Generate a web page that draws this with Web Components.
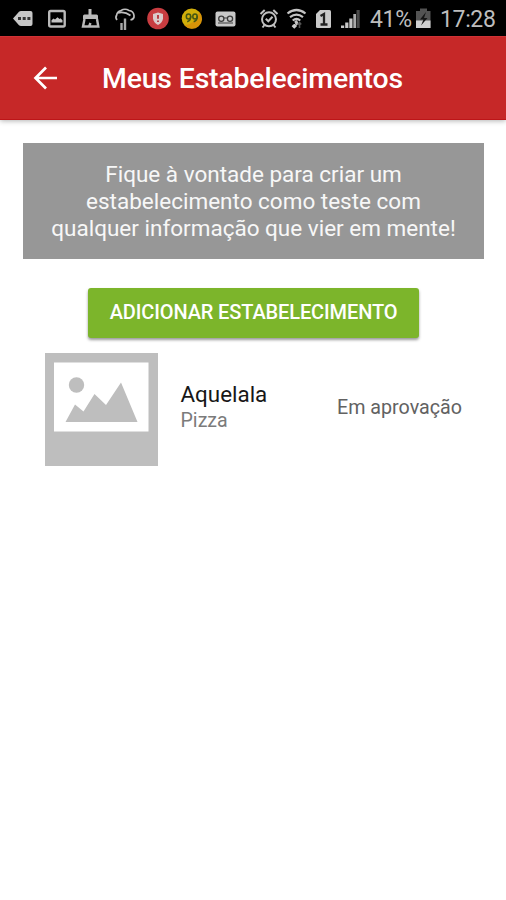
<!DOCTYPE html>
<html lang="pt-BR">
<head>
<meta charset="utf-8">
<title>Meus Estabelecimentos</title>
<style>
body { margin: 0; background: #fff; font-family: Roboto, "Liberation Sans", sans-serif; }
</style>
</head>
<body>
<app-screen>
  <status-bar slot="status"></status-bar>
  <app-toolbar slot="toolbar">Meus Estabelecimentos</app-toolbar>
  <info-banner>Fique à vontade para criar um<br>estabelecimento como teste com<br>qualquer informação que vier em mente!</info-banner>
  <raised-button>ADICIONAR ESTABELECIMENTO</raised-button>
  <place-item>
    <span slot="name">Aquelala</span>
    <span slot="kind">Pizza</span>
    <span slot="state">Em aprovação</span>
  </place-item>
</app-screen>
<script>
class BaseElement extends HTMLElement {
  constructor() {
    super();
    this.attachShadow({ mode: "open" }).innerHTML = this.constructor.markup;
  }
}

customElements.define("app-screen", class extends BaseElement {
  static markup = `
    <style>
      :host { display: flex; flex-direction: column; height: 900px; overflow: hidden; }
      main { display: flex; flex-direction: column; align-items: center; padding: 23px 22px 0 23px; }
    </style>
    <slot name="status"></slot>
    <slot name="toolbar"></slot>
    <main><slot></slot></main>`;
});

/* Each status icon is a 36px tall strip; the strips sit side by side along the bar. */
customElements.define("status-bar", class extends BaseElement {
  static markup = `
    <style>
      :host { display: flex; height: 36px; background: #000; color: #bdbdbd; overflow: hidden; }
      svg { display: block; flex: none; height: 36px; }
      span { flex: none; font-size: 23px; line-height: 40px; white-space: nowrap; }
      .pct { width: 44px; letter-spacing: -.35px; }
      .time { letter-spacing: -.35px; }
    </style>
    <svg width="40" viewBox="0 0 40 36"><path d="M13 18.500 19 11.800q.8-.8 2-.8h9.500q2 0 2 2v11q0 2-2 2H21q-1.200 0-2-.8z" fill="#c6c6c6"/><path d="M18 17h3v3h-3zm4.700 0h3v3h-3zm4.700 0h3v3h-3z" fill="#333"/></svg>
    <svg width="34" viewBox="40 0 34 36"><rect x="49.200" y="11" width="15.500" height="15.500" rx="1.500" fill="none" stroke="#b9b9b9" stroke-width="2.400"/><path d="M51.500 22.500v-2.200l2-1.800 1.500 1 2.500-2.300 2 1.800 1-.8 2 2v2.300z" fill="#c4c4c4"/></svg>
    <svg width="34" viewBox="74 0 34 36"><path d="M88.500 9h3v5.500h5q1.500 0 1.500 1.500V19H83v-3q0-1.500 1.500-1.500h4z" fill="#b9b9b9"/><path d="M84.500 19 83 26.500h15.300L97 19M89 26.500l1.500-3.500" fill="none" stroke="#b9b9b9" stroke-width="2.400"/></svg>
    <svg width="33" viewBox="108 0 33 36"><path d="M117 20q-2-2.500-.3-5 .3-3.500 4.300-4.500 4-2.500 8 0 4.500.5 5 5 .5 3.500-3.500 4.500M117.500 13q7-2 13 2.500" fill="none" stroke="#bebebe" stroke-width="1.700"/><path d="M121.500 23v7M125 18.500v11.500" stroke="#a8a8a8" stroke-width="2.400"/></svg>
    <svg width="34" viewBox="141 0 34 36"><circle cx="158" cy="18.500" r="10.800" fill="#c83c40"/><path d="m158 12.500 5 1.500v4.500q-.5 4-5 6.500-4.500-2.500-5-6.500V14z" fill="#dbcaca"/><path d="M158 15v3.800M158 20.500v1.500" stroke="#b53038" stroke-width="1.800"/></svg>
    <svg width="34" viewBox="175 0 34 36"><circle cx="191.700" cy="18.500" r="10" fill="#d1ae0a"/><path d="M199.500 12a10 10 0 0 1-15 13.500q10-1 15-13.500" fill="#d89308"/><g fill="none" stroke="#465713" stroke-width="1.500"><ellipse cx="188.500" cy="16.500" rx="2.200" ry="2.500"/><path d="M190.700 16q.3 4.500-3.500 5.800"/><ellipse cx="195" cy="16.500" rx="2.200" ry="2.500"/><path d="M197.200 16q.3 4.500-3.500 5.800"/></g></svg>
    <svg width="46" viewBox="209 0 46 36"><rect x="215.500" y="11.500" width="20" height="15" rx="2" fill="#c8c8c8"/><g fill="none" stroke="#3d3d3d" stroke-width="1.300"><circle cx="221.300" cy="18.800" r="2.600"/><circle cx="230" cy="18.800" r="2.600"/><path d="M218 23h15M223.500 18h4" stroke-width="1.100"/></g></svg>
    <svg width="28" viewBox="255 0 28 36"><g fill="none" stroke="#c1c1c1" stroke-width="2"><circle cx="269" cy="19.300" r="7"/><path d="m260.500 14 4.200-4M277.500 14l-4.200-4M264.500 25l-2 2.500M273.500 25l2 2.500M265.800 18.700l2.500 2.600 4.200-4.500"/></g></svg>
    <svg width="28" viewBox="283 0 28 36"><g fill="none" stroke="#c4c4c4" stroke-width="2.200"><path d="M287.500 13.500q9-7 18 0M290 17.200q6.500-5 13 0M292.700 20.500q3.800-3 7.600 0"/></g><path d="m294.300 21.500 2.200-1.500 1.500 2v2.300l-2 1.700z" fill="#c4c4c4"/><path d="M294.300 24v3M292.300 25.500l2 2 2-2" stroke="#ccc" fill="none" stroke-width="1.800"/><path d="M299.500 28v-5M297.800 24.500l1.700-2 1.700 2" stroke="#555" fill="none" stroke-width="1.600"/></svg>
    <svg width="26" viewBox="311 0 26 36"><path d="M320 10h9.500q1.500 0 1.500 1.500v15.500q0 1-1.500 1h-12q-1.500 0-1.500-1V14z" fill="#cacaca"/><path d="m320.500 16 3.500-2v10.500M320.500 24.500h7" fill="none" stroke="#222" stroke-width="2.300"/></svg>
    <svg width="33" viewBox="337 0 33 36"><path d="M341 25.500h3.200V28H341zM345.200 22.500h3.200V28h-3.200zM349.300 18.500h3.200V28h-3.200z" fill="#c7c7c7"/><path d="M353.300 14h2.700v14h-2.700z" fill="#aaa"/><path d="M356.500 10h3.200v18h-3.200z" fill="#4a4a4a"/></svg>
    <span class="pct">41%</span>
    <svg width="26" viewBox="414 0 26 36"><path d="M420 8.500h7V11h3.500v17H416V11h4z" fill="#535353"/><path d="M416 20.500h14.500V28H416z" fill="#d0d0d0"/><path d="m426 12-6 7.500h3.500l-2.500 6 6.500-7.500H424z" fill="#151515"/></svg>
    <span class="time">17:28</span>`;
});

customElements.define("app-toolbar", class extends BaseElement {
  static markup = `
    <style>
      :host { display: flex; align-items: center; height: 84px; box-sizing: border-box; padding-left: 33px; background: #c62828; color: #fff; box-shadow: inset 0 1px #d03236, inset 0 -1px #bd1518, 0 1px 5px rgba(0,0,0,.3); }
      svg { flex: none; margin-right: 44px; }
      h1 { margin: 0; padding-top: 1px; font-size: 28.400px; letter-spacing: -.15px; font-weight: 500; line-height: 36px; white-space: nowrap; }
    </style>
    <svg width="25" height="24" viewBox="0 0 25 24"><path d="M24 12H3M13 1.500 2.500 12 13 22.500" fill="none" stroke="#fff" stroke-width="2.700"/></svg>
    <h1><slot></slot></h1>`;
});

customElements.define("info-banner", class extends BaseElement {
  static markup = `
    <style>
      :host { display: block; align-self: stretch; height: 116px; box-sizing: border-box; padding-top: 18px; background: #979797; color: #f7f7f7; text-align: center; font-size: 22.500px; line-height: 27px; white-space: nowrap; }
    </style>
    <slot></slot>`;
});

customElements.define("raised-button", class extends BaseElement {
  static markup = `
    <style>
      :host { display: block; margin-top: 29px; }
      button { display: block; width: 331px; height: 50px; padding: 0 0 2px; border: 0; border-radius: 3px; background: #7cb52b; color: #fff; font: 500 20px/24px Roboto, sans-serif; letter-spacing: -.12px; white-space: nowrap; box-shadow: 0 2px 3px rgba(0,0,0,.4); }
    </style>
    <button><slot></slot></button>`;
});

customElements.define("place-item", class extends BaseElement {
  static markup = `
    <style>
      :host { display: flex; align-self: stretch; align-items: center; height: 113px; margin-top: 15px; padding: 0 22px; white-space: nowrap; }
      svg { flex: none; margin-right: 22.500px; }
      .text { flex: 1; padding-bottom: 5px; }
      .name { color: #171717; font-size: 22.400px; line-height: 24px; padding-bottom: 2px; }
      .kind { color: #7b7b7b; font-size: 19.600px; line-height: 25px; }
      .state { color: #626262; font-size: 19.700px; line-height: 24px; padding-bottom: 4px; }
    </style>
    <svg width="113" height="113" viewBox="0 0 113 113"><path d="M0 0h113v113H0z" fill="#bebebe"/><path d="M9 9.500h94.500v69H9z" fill="#fff"/><g fill="#bebebe"><circle cx="31.500" cy="32" r="7.700"/><path d="M20.500 69 30 51.500l8.500 7L49.500 41l11.500 11L76 29.500 92.500 69z"/></g></svg>
    <div class="text"><div class="name"><slot name="name"></slot></div><div class="kind"><slot name="kind"></slot></div></div>
    <div class="state"><slot name="state"></slot></div>`;
});
</script>
</body>
</html>
